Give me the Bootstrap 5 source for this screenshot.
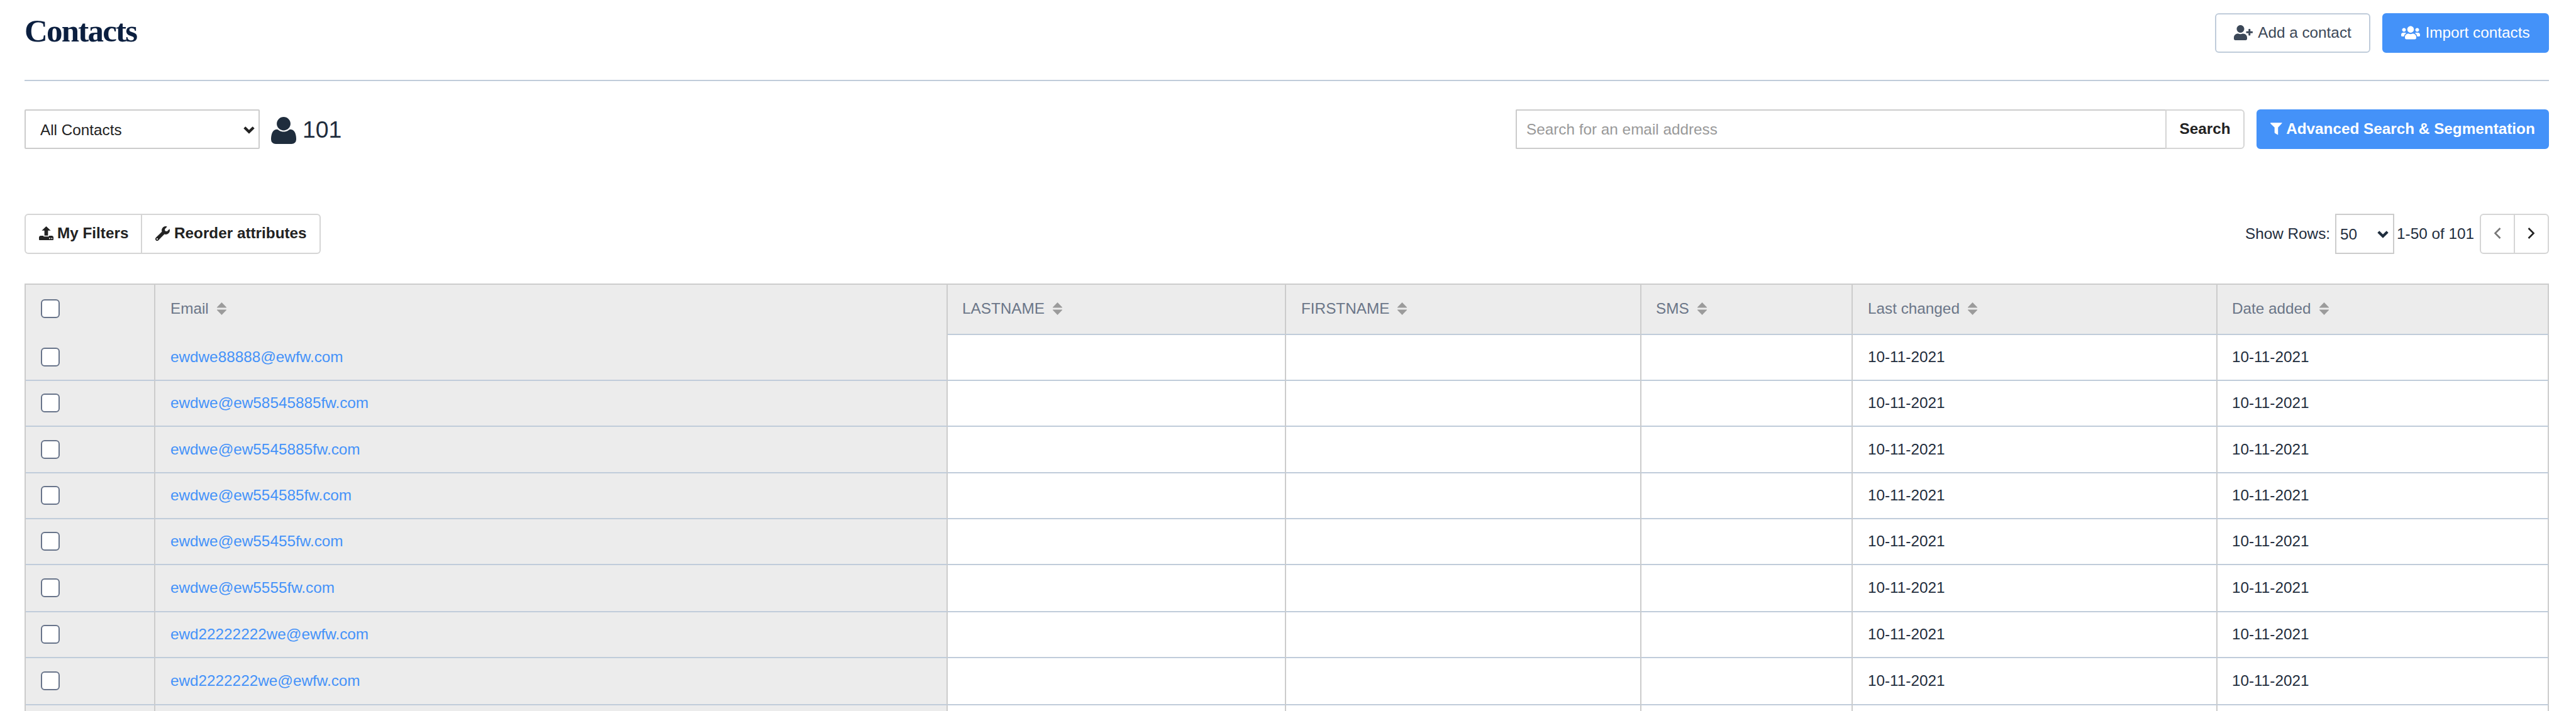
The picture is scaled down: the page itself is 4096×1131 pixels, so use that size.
<!DOCTYPE html>
<html lang="en">
<head>
<meta charset="utf-8">
<title>Contacts</title>
<meta name="viewport" content="width=device-width, initial-scale=1">
<link href="https://cdn.jsdelivr.net/npm/bootstrap@5.3.0/dist/css/bootstrap.min.css" rel="stylesheet">
<style>
  body{font-family:"Liberation Sans",Arial,sans-serif;font-size:24.3px;line-height:28px;color:#1f2d3d;background:#fff;height:100vh;overflow:hidden}
  svg{display:block;flex:none}
  .page{padding:0 43px 0 39px}
  .page-head{height:129px;border-bottom:2px solid #c0ccda;padding-top:21px}
  .page-title{font:700 51px/57px "Liberation Serif",Georgia,serif;letter-spacing:-1.8px;color:#0b1f3f;margin:0}
  .ui-btn{--bs-btn-font-size:24.3px;--bs-btn-line-height:28px;--bs-btn-border-width:2px;--bs-btn-border-radius:6px;--bs-btn-padding-y:0;--bs-btn-padding-x:0;
    --bs-btn-border-color:#d5d5d5;--bs-btn-color:#222;--bs-btn-bg:#fff;display:inline-flex;align-items:center;justify-content:center;height:63px;white-space:nowrap;padding-bottom:2px}
  .ui-btn.outline{--bs-btn-border-color:#c0ccda;--bs-btn-color:#3c4858;width:247px}
  .ui-btn.solid{--bs-btn-border-color:#4492f9;--bs-btn-color:#fff;--bs-btn-bg:#4492f9}
  .ui-btn.import{width:265px}
  .ui-btn.advanced{width:465px;gap:6px}
  .head-actions,.search-zone{gap:19px}
  .search-row{margin-top:45px;height:63px}
  .pick{border:2px solid #ccc;background:#fff;color:#222;height:100%}
  .pick-list{width:374px;border-radius:2px;padding:2px 6px 0 23px}
  .pick-rows{width:94px;color:#1f2d3d;padding:2px 7px 0 6px}
  .total{font-size:37.4px;line-height:44px}
  .search-box{width:1159px}
  .search-box .form-control{height:63px;font-size:24.3px;line-height:28px;border:2px solid #ccc;border-right:0;border-radius:2px 0 0 2px;padding:1px 15px 0;color:#222}
  .search-box .form-control::placeholder{color:#999;opacity:1}
  .search-box .ui-btn{width:126px;flex:none}
  .tool-row{margin-top:103px;height:64px}
  .tool-row .ui-btn{height:64px}
  .ui-btn.tool{justify-content:flex-start;padding-left:21px;gap:6px}
  .btn-filters{width:187px;border-right-width:2px}
  .btn-reorder{width:284px;border-left-width:0}
  .ui-btn.btn-reorder{gap:7px}
  .btn-prev{width:56px}.btn-next{width:54px;border-left-width:0}
  .btn-prev{--bs-btn-color:#777}
  .contacts-grid{table-layout:fixed;width:4014px;margin:47px 0 0;border-collapse:separate;border-spacing:0;border-top:2px solid #ccc;border-left:2px solid #ccc;--bs-table-bg:#fff;color:#1f2d3d}
  .contacts-grid tr > *{padding:0 0 1px 23px;border:0;border-right:2px solid #ccc;border-bottom:2px solid #c0ccda;vertical-align:middle;font-weight:400;color:#1f2d3d;background:#fff}
  .contacts-grid thead th{background:#ececec;color:#6b7688;padding-bottom:2px}
  .contacts-grid tr > :nth-child(-n+2){background:#ececec;padding-left:24px}
  .contacts-grid tr > :nth-child(4),.contacts-grid tr > :nth-child(6){padding-left:24px}
  .contacts-grid thead tr > :nth-child(-n+2){border-bottom:0;padding-bottom:4px}
  .contacts-grid thead tr{height:80px}
  .contacts-grid tbody tr{height:73px}
  .contacts-grid tbody tr:nth-child(3){height:74px}
  .contacts-grid tbody tr:nth-child(6),.contacts-grid tbody tr:nth-child(8){height:75px}
  .contacts-grid tbody tr:last-child{height:9px}
  .contacts-grid tbody tr:last-child > td{border-bottom:0}
  .contacts-grid a{color:#4492f9;text-decoration:none}
  .contacts-grid .form-check-input{display:block;float:none;width:30px;height:30px;margin:0;border:2px solid #68748a;border-radius:6px;background:#fff}
  .sorter{gap:13px}
</style>
<script src="https://cdn.jsdelivr.net/npm/bootstrap@5.3.0/dist/js/bootstrap.bundle.min.js"></script>
</head>
<body>
<svg class="d-none">
  <symbol id="sort" viewBox="0 0 15 20"><path fill="#9b9b9b" d="M7.500 0 15 7.800v.7H0v-.7zM0 11.500h15v.7L7.500 20 0 12.200z"/></symbol>
  <symbol id="caret" viewBox="0 0 18 12"><path d="M1.8 1.8 9 8.8l7.200-7" fill="none" stroke="currentColor" stroke-width="4.300"/></symbol>
</svg>
<main class="page">
  <header class="page-head d-flex justify-content-between align-items-start">
    <h1 class="page-title">Contacts</h1>
    <div class="head-actions d-flex">
      <button class="btn ui-btn outline" type="button">
        <svg width="30" height="24" viewBox="0 0 640 512" fill="currentColor"><path d="M624 208h-64v-64c0-8.800-7.200-16-16-16h-32c-8.800 0-16 7.200-16 16v64h-64c-8.800 0-16 7.200-16 16v32c0 8.800 7.200 16 16 16h64v64c0 8.800 7.200 16 16 16h32c8.800 0 16-7.200 16-16v-64h64c8.800 0 16-7.200 16-16v-32c0-8.800-7.200-16-16-16zm-400 48c70.700 0 128-57.300 128-128S294.700 0 224 0 96 57.300 96 128s57.300 128 128 128zm89.600 32h-16.700c-22.200 10.200-46.900 16-72.900 16s-50.600-5.800-72.900-16h-16.700C60.200 288 0 348.200 0 422.400V464c0 26.500 21.500 48 48 48h352c26.500 0 48-21.500 48-48v-41.600c0-74.200-60.200-134.400-134.400-134.400z"/></svg>
        <span class="ms-2">Add a contact</span>
      </button>
      <button class="btn ui-btn solid import" type="button">
        <svg width="30" height="24" viewBox="0 0 640 512" fill="currentColor"><path d="M96 224c35.300 0 64-28.700 64-64s-28.700-64-64-64-64 28.700-64 64 28.700 64 64 64zm448 0c35.300 0 64-28.700 64-64s-28.700-64-64-64-64 28.700-64 64 28.700 64 64 64zm32 32h-64c-17.600 0-33.500 7.100-45.100 18.600 40.300 22.100 68.900 62 75.100 109.400h66c17.700 0 32-14.300 32-32v-32c0-35.300-28.700-64-64-64zm-256 0c61.900 0 112-50.100 112-112S381.900 32 320 32 208 82.100 208 144s50.100 112 112 112zm76.800 32h-8.300c-20.800 10-43.900 16-68.500 16s-47.600-6-68.500-16h-8.300C179.600 288 128 339.600 128 403.200V432c0 26.500 21.500 48 48 48h288c26.500 0 48-21.500 48-48v-28.800c0-63.600-51.600-115.200-115.200-115.200zm-223.700-13.400C161.500 263.100 145.600 256 128 256H64c-35.300 0-64 28.700-64 64v32c0 17.700 14.300 32 32 32h65.900c6.300-47.400 34.900-87.300 75.200-109.400z"/></svg>
        <span class="ms-2">Import contacts</span>
      </button>
    </div>
  </header>

  <section class="search-row d-flex justify-content-between">
    <div class="d-flex align-items-center">
      <div class="pick pick-list d-flex align-items-center justify-content-between" role="combobox" tabindex="0"><span>All Contacts</span><svg width="18" height="12"><use href="#caret"/></svg></div>
      <svg class="mt-1" style="margin-left:18px" width="40" height="43" viewBox="0 128 1408 1536" preserveAspectRatio="none" fill="#1f2d3d"><path d="M1408 1405q0 120-73 189.500t-194 69.500h-874q-121 0-194-69.500t-73-189.500q0-53 3.500-103.500t14-109 26.500-108.500 43-97.500 62-81 85.500-53.500 111.500-20q9 0 42 21.500t74.500 48 108 48 133.500 21.500 133.500-21.500 108-48 74.500-48 42-21.500q61 0 111.500 20t85.500 53.500 62 81 43 97.500 26.500 108.500 14 109 3.500 103.500zm-320-893q0 159-112.500 271.500t-271.500 112.500-271.500-112.500-112.500-271.500 112.500-271.500 271.500-112.500 271.500 112.500 112.500 271.500z"/></svg>
      <span class="total" style="margin-left:10px">101</span>
    </div>
    <div class="search-zone d-flex">
      <div class="search-box input-group flex-nowrap">
        <input class="form-control" type="text" placeholder="Search for an email address" aria-label="Search for an email address">
        <button class="btn ui-btn fw-bold" type="button">Search</button>
      </div>
      <button class="btn ui-btn solid advanced fw-bold" type="button">
        <svg width="19" height="20" viewBox="0 0 20.500 21" fill="currentColor"><path d="M0 .8Q0 0 .8 0h18.900q.8 0 .3.900L13.200 8v12.400q-.2.600-.7.200L8 18q-.8-.5-.8-1.500V8L.2 1.400z"/></svg>
        <span>Advanced Search &amp; Segmentation</span>
      </button>
    </div>
  </section>

  <section class="tool-row d-flex justify-content-between">
    <div class="btn-group">
      <button class="btn ui-btn tool btn-filters fw-bold flex-grow-0" type="button">
        <svg width="23" height="22" viewBox="0 0 24 23" fill="currentColor"><path d="m12 0 7.400 7H15v8.300H9V7H4.600z"/><path fill-rule="evenodd" d="M2 15.700h5.500V17h9v-1.300H22l2 1.800V22q0 1-1 1H1q-1 0-1-1v-4.500zM16.800 19.400v1.900h1.900v-1.900zM20.300 19.400v1.900h1.900v-1.900z"/></svg>
        <span>My Filters</span>
      </button>
      <button class="btn ui-btn tool btn-reorder fw-bold flex-grow-0 m-0" type="button">
        <svg width="23" height="23" viewBox="0 0 512 512" fill="currentColor"><path d="M507.730 109.100c-2.240-9.030-13.540-12.090-20.120-5.510l-74.360 74.360-67.880-11.310-11.310-67.880 74.360-74.360c6.620-6.620 3.430-17.900-5.660-20.160-47.380-11.740-99.550.910-136.580 37.930-39.640 39.640-50.550 97.100-34.050 147.200L18.740 402.760c-24.990 24.990-24.990 65.510 0 90.500 24.990 24.990 65.510 24.990 90.500 0l213.210-213.210c50.120 16.710 107.470 5.680 147.370-34.220 37.070-37.070 49.700-89.320 37.910-136.730zM64 472c-13.250 0-24-10.750-24-24 0-13.260 10.750-24 24-24s24 10.740 24 24c0 13.250-10.750 24-24 24z"/></svg>
        <span>Reorder attributes</span>
      </button>
    </div>
    <div class="d-flex align-items-center">
      <span>Show Rows:</span>
      <div class="pick pick-rows d-flex align-items-center justify-content-between" style="margin-left:8px;margin-right:4px" role="combobox" tabindex="0"><span>50</span><svg width="18" height="12"><use href="#caret"/></svg></div>
      <span>1-50 of 101</span>
      <div class="btn-group" style="margin-left:9px">
        <button class="btn ui-btn btn-prev flex-grow-0" type="button" aria-label="Previous"><svg width="12" height="18" viewBox="0 0 12 18"><path d="M10.500 1 2.500 9l8 8" fill="none" stroke="currentColor" stroke-width="2.600"/></svg></button>
        <button class="btn ui-btn btn-next flex-grow-0 m-0" type="button" aria-label="Next"><svg width="12" height="18" viewBox="0 0 12 18"><path d="m1.500 1 8 8-8 8" fill="none" stroke="currentColor" stroke-width="2.600"/></svg></button>
      </div>
    </div>
  </section>

  <table class="table contacts-grid">
    <colgroup><col style="width:206px"><col style="width:1260px"><col style="width:538px"><col style="width:565px"><col style="width:336px"><col style="width:580px"><col style="width:527px"></colgroup>
    <thead>
      <tr>
        <th><input class="form-check-input" type="checkbox" aria-label="Select all"></th>
        <th><div class="sorter d-flex align-items-center">Email<svg width="15" height="20"><use href="#sort"/></svg></div></th>
        <th><div class="sorter d-flex align-items-center">LASTNAME<svg width="15" height="20"><use href="#sort"/></svg></div></th>
        <th><div class="sorter d-flex align-items-center">FIRSTNAME<svg width="15" height="20"><use href="#sort"/></svg></div></th>
        <th><div class="sorter d-flex align-items-center">SMS<svg width="15" height="20"><use href="#sort"/></svg></div></th>
        <th><div class="sorter d-flex align-items-center">Last changed<svg width="15" height="20"><use href="#sort"/></svg></div></th>
        <th><div class="sorter d-flex align-items-center">Date added<svg width="15" height="20"><use href="#sort"/></svg></div></th>
      </tr>
    </thead>
    <tbody>
      <tr><td><input class="form-check-input" type="checkbox"></td><td><a href="#">ewdwe88888@ewfw.com</a></td><td></td><td></td><td></td><td>10-11-2021</td><td>10-11-2021</td></tr>
      <tr><td><input class="form-check-input" type="checkbox"></td><td><a href="#">ewdwe@ew58545885fw.com</a></td><td></td><td></td><td></td><td>10-11-2021</td><td>10-11-2021</td></tr>
      <tr><td><input class="form-check-input" type="checkbox"></td><td><a href="#">ewdwe@ew5545885fw.com</a></td><td></td><td></td><td></td><td>10-11-2021</td><td>10-11-2021</td></tr>
      <tr><td><input class="form-check-input" type="checkbox"></td><td><a href="#">ewdwe@ew554585fw.com</a></td><td></td><td></td><td></td><td>10-11-2021</td><td>10-11-2021</td></tr>
      <tr><td><input class="form-check-input" type="checkbox"></td><td><a href="#">ewdwe@ew55455fw.com</a></td><td></td><td></td><td></td><td>10-11-2021</td><td>10-11-2021</td></tr>
      <tr><td><input class="form-check-input" type="checkbox"></td><td><a href="#">ewdwe@ew5555fw.com</a></td><td></td><td></td><td></td><td>10-11-2021</td><td>10-11-2021</td></tr>
      <tr><td><input class="form-check-input" type="checkbox"></td><td><a href="#">ewd22222222we@ewfw.com</a></td><td></td><td></td><td></td><td>10-11-2021</td><td>10-11-2021</td></tr>
      <tr><td><input class="form-check-input" type="checkbox"></td><td><a href="#">ewd2222222we@ewfw.com</a></td><td></td><td></td><td></td><td>10-11-2021</td><td>10-11-2021</td></tr>
      <tr><td></td><td></td><td></td><td></td><td></td><td></td><td></td></tr>
    </tbody>
  </table>
</main>
</body>
</html>
